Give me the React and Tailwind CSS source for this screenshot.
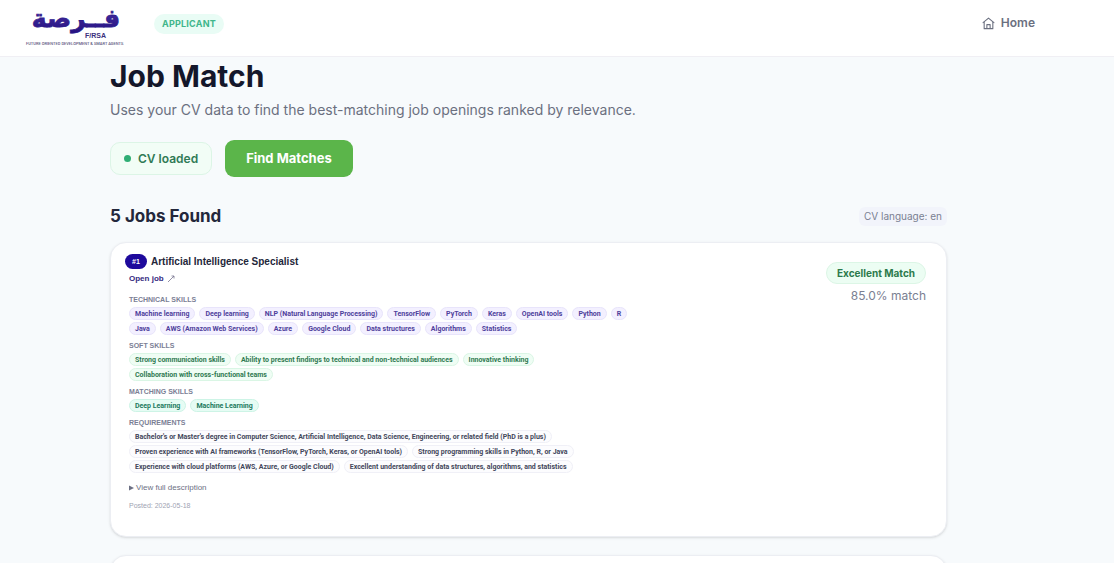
import React from "react";

const jobs = [
  {
    rank: 1,
    title: "Artificial Intelligence Specialist",
    label: "Excellent Match",
    score: "85.0% match",
    posted: "2026-05-18",
    technical: [
      "Machine learning",
      "Deep learning",
      "NLP (Natural Language Processing)",
      "TensorFlow",
      "PyTorch",
      "Keras",
      "OpenAI tools",
      "Python",
      "R",
      "Java",
      "AWS (Amazon Web Services)",
      "Azure",
      "Google Cloud",
      "Data structures",
      "Algorithms",
      "Statistics",
    ],
    soft: [
      "Strong communication skills",
      "Ability to present findings to technical and non-technical audiences",
      "Innovative thinking",
      "Collaboration with cross-functional teams",
    ],
    matching: ["Deep Learning", "Machine Learning"],
    requirements: [
      "Bachelor's or Master's degree in Computer Science, Artificial Intelligence, Data Science, Engineering, or related field (PhD is a plus)",
      "Proven experience with AI frameworks (TensorFlow, PyTorch, Keras, or OpenAI tools)",
      "Strong programming skills in Python, R, or Java",
      "Experience with cloud platforms (AWS, Azure, or Google Cloud)",
      "Excellent understanding of data structures, algorithms, and statistics",
    ],
  },
];

const tones = {
  purple: "bg-[#f3f0ff] border-[#e8e4fb] text-[#4f419c]",
  green: "bg-[#effdf4] border-[#daf6e5] text-[#2f7a52]",
  teal: "bg-[#e6fcf4] border-[#cdf4e6] text-[#237a5e]",
  gray: "bg-[#fcfcfe] border-[#f0f0f7] text-[#43475b]",
};

const Logo = () => (
  <svg viewBox="0 0 102 48" className="w-[102px] h-12 overflow-visible" role="img" aria-label="FORSA">
    <defs>
      <linearGradient id="ink" x1="0" y1="0" x2="0" y2="1">
        <stop offset="0" stopColor="#4a35a8" />
        <stop offset="1" stopColor="#24107f" />
      </linearGradient>
    </defs>
    <text
      x="51"
      y="27"
      textAnchor="middle"
      fontSize="25"
      fontWeight="700"
      fill="url(#ink)"
      stroke="#2f1b8c"
      strokeWidth="0.8"
      fontFamily="'DejaVu Sans', sans-serif"
    >
      فــرصة
    </text>
    <text x="60" y="38" fontSize="7" fontWeight="700" fill="#3b2f7d" fontFamily="'Liberation Sans', sans-serif">
      F/RSA
    </text>
    <text x="1" y="45" fontSize="4" fontWeight="500" fill="#5d5780" fontFamily="Roboto, sans-serif">
      FUTURE ORIENTED DEVELOPMENT &amp; SMART AGENTS
    </text>
  </svg>
);

const HomeIcon = () => (
  <svg
    viewBox="0 0 24 24"
    className="w-[13px] h-[13px]"
    fill="none"
    stroke="currentColor"
    strokeWidth="2"
    strokeLinecap="round"
    strokeLinejoin="round"
  >
    <path d="M2 10.500 12 2l10 8.500" />
    <path d="M4 9.500V21.500h16V9.500" />
    <path d="M9 21v-7h6v7" />
  </svg>
);

const Header = () => (
  <header className="h-[57px] bg-white border-b border-[#f0eff4] flex items-start justify-between pl-[25px] pr-[79px]">
    <div className="flex items-center">
      <Logo />
      <span className="ml-[27px] h-5 px-2 rounded-full bg-[#e9fcf5] text-[#3fb68b] text-[9px] leading-5 font-bold tracking-wide">
        APPLICANT
      </span>
    </div>
    <a href="#home" className="h-[46px] flex items-center gap-[6px] text-[12px] font-semibold text-[#6b7080]">
      <HomeIcon />
      Home
    </a>
  </header>
);

const Section = ({ name, items, tone }) => (
  <section className="mt-[7px]">
    <h4 className="text-[7px] leading-[8px] font-bold text-[#7b8095]">{name}</h4>
    <ul className="mt-[3px] flex flex-wrap gap-x-1 gap-y-[2px] font-[Roboto,sans-serif]">
      {items.map((e, i) => (
        <li
          key={i}
          className={`h-[13px] px-[5px] border rounded-full text-[7px] leading-[12px] font-bold whitespace-nowrap ${tones[tone]}`}
        >
          {e}
        </li>
      ))}
    </ul>
  </section>
);

const JobCard = ({ job }) => (
  <article className="min-h-[295px] bg-white border border-[#eceef3] rounded-2xl shadow-sm pl-[14px] pr-5 pt-[11px] flex justify-between items-start">
    <div className="font-['Liberation_Sans',Arial,sans-serif]">
      <div className="flex items-center gap-1">
        <span className="w-[22px] h-[15px] rounded-full bg-[#1e0a9c] text-white text-[7px] leading-[15px] font-bold text-center">
          #{job.rank}
        </span>
        <h3 className="text-[10px] leading-[15px] font-bold text-[#23263a]">{job.title}</h3>
      </div>
      <div className="pl-1 max-w-[510px]">
        <a href="#job" className="mt-[5px] flex items-center gap-[3px] text-[8px] leading-[10px] font-bold text-[#352a80]">
          Open job
          <svg viewBox="0 0 8 8" className="w-2 h-2" fill="none" stroke="#77738f" strokeWidth="0.8">
            <path d="M1 7 7 1M4.500 1H7v2.500" />
          </svg>
        </a>
        <div className="pt-[5px]">
          <Section name="TECHNICAL SKILLS" items={job.technical} tone="purple" />
          <Section name="SOFT SKILLS" items={job.soft} tone="green" />
          <Section name="MATCHING SKILLS" items={job.matching} tone="teal" />
          <Section name="REQUIREMENTS" items={job.requirements} tone="gray" />
        </div>
        <button type="button" className="mt-[10px] flex items-center gap-[2px] text-[8px] leading-[10px] text-[#6c7084]">
          <svg viewBox="0 0 5 6" className="w-[5px] h-[6px]" fill="currentColor">
            <path d="M0 0.500 5 3 0 5.500z" />
          </svg>
          View full description
        </button>
        <p className="mt-[9px] text-[7px] leading-[8px] text-[#a0a3b3]">Posted: {job.posted}</p>
      </div>
    </div>
    <div className="pt-2 flex flex-col items-end">
      <span className="h-[22px] px-[10px] border border-[#dcf6e6] rounded-full bg-[#ecfdf3] text-[#2b7a4b] text-[10px] leading-5 font-bold">
        {job.label}
      </span>
      <span className="mt-1 text-[12px] leading-4 text-[#7a8092]">{job.score}</span>
    </div>
  </article>
);

const App = () => {
  return (
    <div className="h-screen overflow-hidden bg-[#f7fafc] font-[Inter,sans-serif]">
      <Header />
      <main className="pl-[110px] pr-[167px] pt-px">
        <h1 className="text-[30px] leading-9 font-bold text-[#14172b]">Job Match</h1>
        <p className="mt-[6px] text-[14px] leading-5 text-[#6b7080]">
          Uses your CV data to find the best-matching job openings ranked by relevance.
        </p>
        <div className="mt-5 flex items-center gap-[13px]">
          <div className="h-[33px] px-[13px] flex items-center gap-[7px] border border-[#dcf5e6] rounded-[10px] bg-[#f2fdf6] text-[#2f7a55] text-[12px] font-semibold">
            <span className="w-[7px] h-[7px] rounded-full bg-[#2fae74]" />
            CV loaded
          </div>
          <button type="button" className="h-[37px] px-[21px] rounded-[9px] bg-[#5bb54a] text-white text-[13px] font-bold">
            Find Matches
          </button>
        </div>
        <div className="mt-7 flex items-center justify-between">
          <h2 className="text-[17px] leading-[22px] font-bold text-[#23273b]">5 Jobs Found</h2>
          <span className="h-[19px] px-[5px] rounded-md bg-[#f2f4fb] text-[#7a8092] text-[10px] leading-[19px]">
            CV language: en
          </span>
        </div>
        <div className="mt-[15px] flex flex-col gap-[18px]">
          {jobs.map((job) => (
            <JobCard key={job.rank} job={job} />
          ))}
          <article className="h-20 bg-white border border-[#eceef3] rounded-2xl shadow-sm" />
        </div>
      </main>
    </div>
  );
};

export default App;
